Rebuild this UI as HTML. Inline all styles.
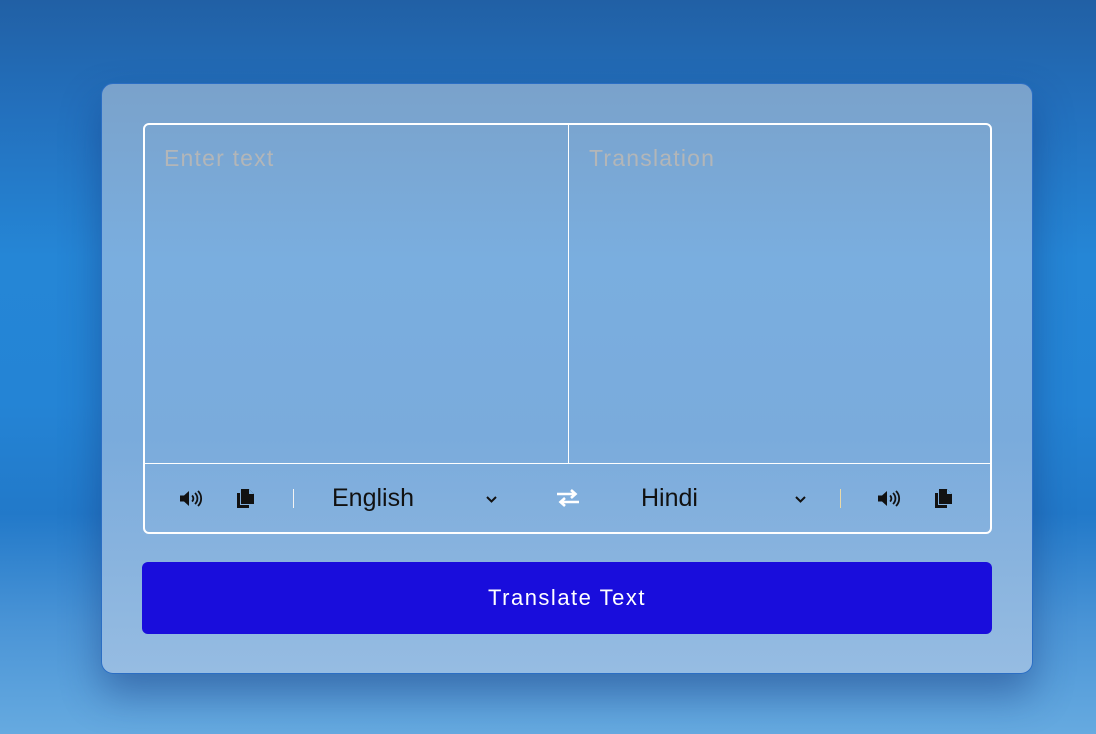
<!DOCTYPE html>
<html><head><meta charset="utf-8"><style>
*{margin:0;padding:0;box-sizing:border-box}
html,body{width:1096px;height:734px;overflow:hidden}
body{font-family:"Liberation Sans",sans-serif;background:linear-gradient(180deg,#2160a5 0%,#2370bd 15%,#2586d6 35%,#2484d5 55%,#2279c9 70%,#4a94d6 85%,#66aae0 100%);position:relative}
.card{position:absolute;left:101px;top:83px;width:932px;height:591px;border-radius:12px;border:1px solid #2b6ec4;background:linear-gradient(180deg,#7aa2cb 0%,#7aaedf 30%,#7aabdc 60%,#88b3de 80%,#96bce2 100%);box-shadow:0 20px 40px rgba(20,50,120,.45)}
.box{position:absolute;left:41px;top:39px;width:849px;height:411px;border:2px solid #fff;border-radius:6px}
.vdiv{position:absolute;left:423px;top:0;width:1px;height:339px;background:#fff}
.hdiv{position:absolute;left:0;top:338px;width:100%;height:1px;background:#fff}
.ph{position:absolute;top:20px;font-size:23px;color:#b3b6b8;letter-spacing:1.2px}
.lang{position:absolute;top:359px;font-size:25px;color:#111}
.sep{position:absolute;top:364px;width:1px;height:19px;background:#f3f3f3}
.ic{position:absolute}
.btn{position:absolute;left:40px;top:478px;width:850px;height:72px;background:#190ddc;border-radius:6px;color:#fff;font-size:22px;letter-spacing:1.5px;text-align:center;line-height:72px}
</style></head><body>
<div class="card">
 <div class="box">
  <div class="vdiv"></div><div class="hdiv"></div>
  <div class="ph" style="left:19px">Enter text</div>
  <div class="ph" style="left:444px">Translation</div>
  <svg class="ic" style="left:35px;top:365px" width="23" height="17" viewBox="0 0 23 17"><path d="M0 5.5h4l5-4.5v15l-5-4.5H0z" fill="#111"/><path d="M12 5.5a4 4 0 0 1 0 6M15 3a7.5 7.5 0 0 1 0 11M18 1a10.5 10.5 0 0 1 0 15" stroke="#111" stroke-width="1.8" fill="none"/></svg>
  <svg class="ic" style="left:92px;top:364px" width="18" height="19" viewBox="0 0 18 19"><path d="M0 4h3v12h9v3H0z" fill="#111"/><path d="M4 0h8l5 5v10H4z" fill="#111"/><path d="M12 0v5h5" fill="#7aaddd"/></svg>
  <div class="sep" style="left:148px"></div>
  <div class="lang" style="left:187px">English</div>
  <svg class="ic" style="left:340px;top:370px" width="13" height="9" viewBox="0 0 13 9"><path d="M2 2l4.5 4.5L11 2" stroke="#111" stroke-width="2" fill="none"/></svg>
  <svg class="ic" style="left:411px;top:364px" width="24" height="18" viewBox="0 0 24 18"><path d="M1 5h18M15 1l4.5 4L15 9M23 13H5M9 9l-4.5 4L9 17" stroke="#fff" stroke-width="2.6" fill="none"/></svg>
  <div class="lang" style="left:496px">Hindi</div>
  <svg class="ic" style="left:649px;top:370px" width="13" height="9" viewBox="0 0 13 9"><path d="M2 2l4.5 4.5L11 2" stroke="#111" stroke-width="2" fill="none"/></svg>
  <div class="sep" style="left:695px;background:#e9d9a8"></div>
  <svg class="ic" style="left:733px;top:365px" width="23" height="17" viewBox="0 0 23 17"><path d="M0 5.5h4l5-4.5v15l-5-4.5H0z" fill="#111"/><path d="M12 5.5a4 4 0 0 1 0 6M15 3a7.5 7.5 0 0 1 0 11M18 1a10.5 10.5 0 0 1 0 15" stroke="#111" stroke-width="1.8" fill="none"/></svg>
  <svg class="ic" style="left:790px;top:364px" width="18" height="19" viewBox="0 0 18 19"><path d="M0 4h3v12h9v3H0z" fill="#111"/><path d="M4 0h8l5 5v10H4z" fill="#111"/><path d="M12 0v5h5" fill="#7aaddd"/></svg>
 </div>
 <div class="btn">Translate Text</div>
</div>
</body></html>
